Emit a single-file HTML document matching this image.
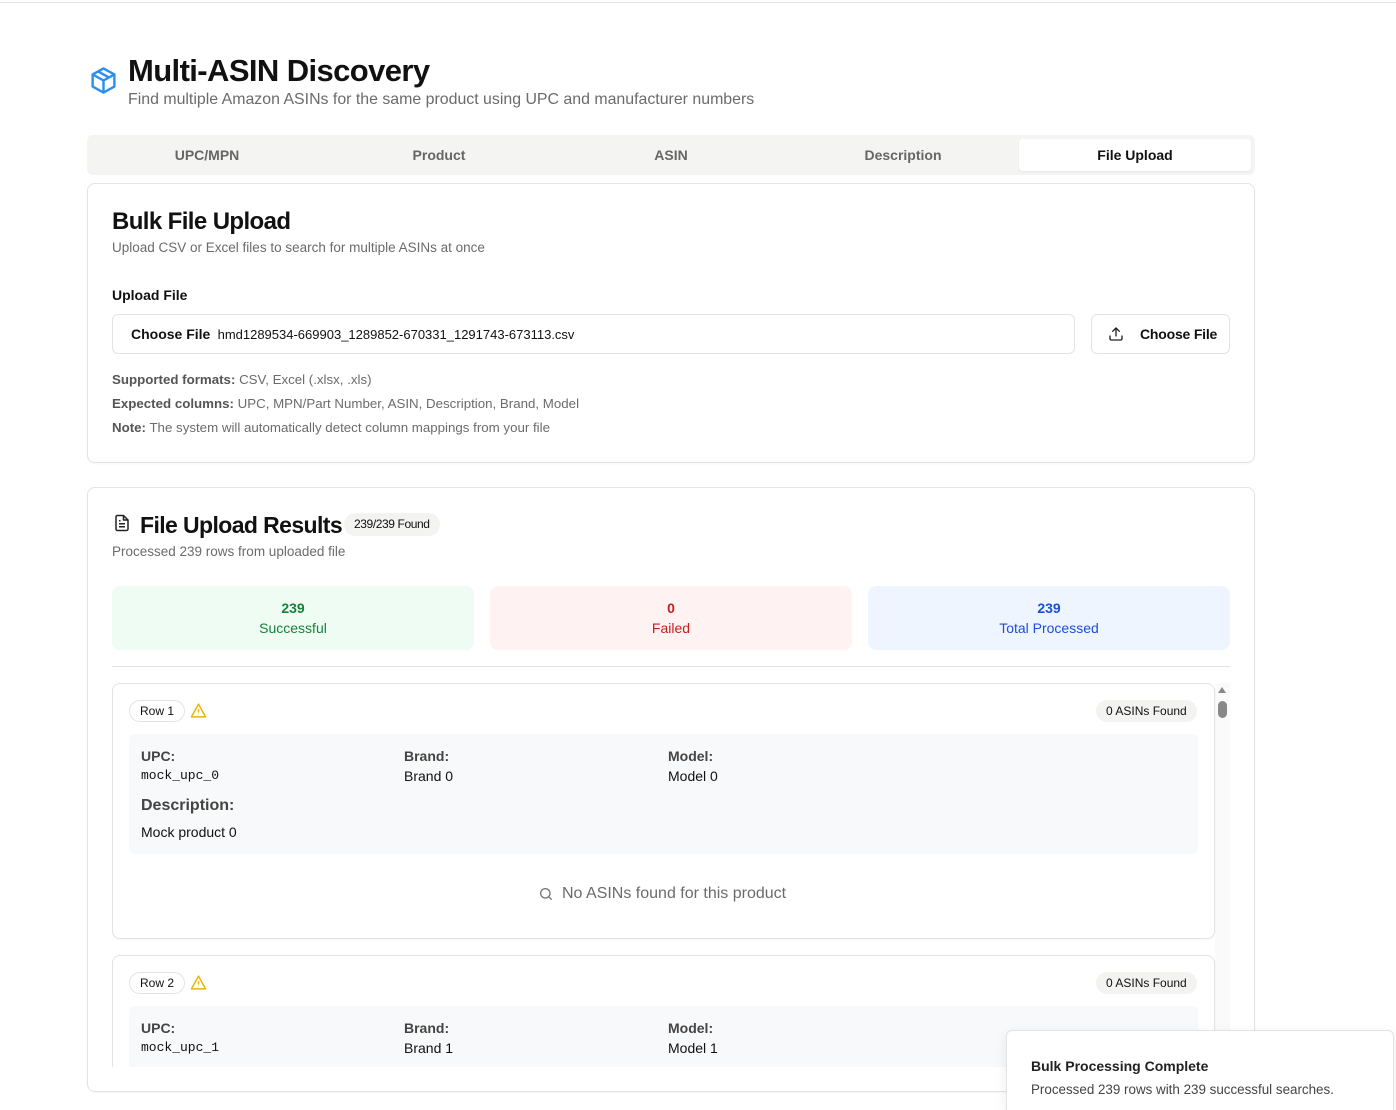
<!DOCTYPE html>
<html><head><meta charset="utf-8"><style>
*{box-sizing:border-box;margin:0;padding:0}
html,body{width:1396px;height:1110px;overflow:hidden}
body{background:#fff;font-family:"Liberation Sans",sans-serif;color:#111;position:relative}
.topline{position:absolute;left:0;top:2px;width:1396px;height:1px;background:#e5e5e5}
.abs{position:absolute}
.card{position:absolute;border:1px solid #e3e3e3;border-radius:8px;background:#fff;box-shadow:0 1px 2px rgba(0,0,0,.04)}
.gray{color:#6b6b6b}
.pill{position:absolute;border:1px solid #e3e3e3;border-radius:12px;font-size:12px;padding:0 10px;height:22px;line-height:20px}
.stat{position:absolute;top:586px;height:64px;width:362px;border-radius:8px;text-align:center;font-size:14px;padding-top:12px;line-height:20px}
.lbl{font-size:14px;font-weight:bold;color:#444}
.mono{font-family:"Liberation Mono",monospace;font-size:13px}
</style></head><body>
<div class="topline"></div>
<svg class="abs" style="left:89px;top:66px" width="29" height="29" viewBox="0 0 24 24" fill="none" stroke="#2b8ff0" stroke-width="2" stroke-linejoin="round"><path d="M12 2 21 7v10l-9 5-9-5V7z"/><path d="M3 7l9 5 9-5M12 12v10M7.5 4.5l9 5"/></svg>
<div class="abs" style="left:128px;top:53px;font-size:31px;font-weight:bold;letter-spacing:-0.6px">Multi-ASIN Discovery</div>
<div class="abs gray" style="left:128px;top:91px;font-size:15.9px">Find multiple Amazon ASINs for the same product using UPC and manufacturer numbers</div>

<div class="abs" style="left:87px;top:135px;width:1168px;height:40px;background:#f4f4f3;border-radius:6px;font-size:14px;font-weight:bold;color:#666">
<div class="abs" style="left:0;width:240px;top:12px;text-align:center">UPC/MPN</div>
<div class="abs" style="left:232px;width:240px;top:12px;text-align:center">Product</div>
<div class="abs" style="left:464px;width:240px;top:12px;text-align:center">ASIN</div>
<div class="abs" style="left:696px;width:240px;top:12px;text-align:center">Description</div>
<div class="abs" style="left:932px;top:4px;width:232px;height:32px;background:#fff;border-radius:4px;color:#111;text-align:center;line-height:32px;box-shadow:0 1px 2px rgba(0,0,0,.06)">File Upload</div>
</div>

<div class="card" style="left:87px;top:183px;width:1168px;height:280px"></div>
<div class="abs" style="left:112px;top:208px;font-size:24px;font-weight:bold;letter-spacing:-0.6px">Bulk File Upload</div>
<div class="abs gray" style="left:112px;top:240px;font-size:13.5px">Upload CSV or Excel files to search for multiple ASINs at once</div>
<div class="abs" style="left:112px;top:287px;font-size:14px;font-weight:bold">Upload File</div>
<div class="abs" style="left:112px;top:314px;width:963px;height:40px;border:1px solid #e3e3e3;border-radius:6px;font-size:13px;line-height:38px;padding-left:18px"><b style="font-size:14px">Choose File</b>&nbsp; hmd1289534-669903_1289852-670331_1291743-673113.csv</div>
<div class="abs" style="left:1091px;top:314px;width:139px;height:40px;border:1px solid #e3e3e3;border-radius:6px;font-size:14px;font-weight:bold;line-height:38px;padding-left:48px;letter-spacing:-0.2px">Choose File</div>
<svg class="abs" style="left:1108px;top:326px" width="16" height="16" viewBox="0 0 24 24" fill="none" stroke="#222" stroke-width="2" stroke-linecap="round" stroke-linejoin="round"><path d="M21 15v4a2 2 0 0 1-2 2H5a2 2 0 0 1-2-2v-4M17 8l-5-5-5 5M12 3v12"/></svg>
<div class="abs gray" style="left:112px;top:368px;font-size:13.3px;line-height:24px"><b style="color:#555">Supported formats:</b> CSV, Excel (.xlsx, .xls)<br><b style="color:#555">Expected columns:</b> UPC, MPN/Part Number, ASIN, Description, Brand, Model<br><b style="color:#555">Note:</b> The system will automatically detect column mappings from your file</div>

<div class="card" style="left:87px;top:487px;width:1168px;height:605px"></div>
<svg class="abs" style="left:113px;top:514px" width="18" height="18" viewBox="0 0 24 24" fill="none" stroke="#222" stroke-width="2" stroke-linejoin="round"><path d="M14 2H6a2 2 0 0 0-2 2v16a2 2 0 0 0 2 2h12a2 2 0 0 0 2-2V8z"/><path d="M14 2v6h6M8 13h8M8 17h8M8 9h2"/></svg>
<div class="abs" style="left:140px;top:512px;font-size:23px;font-weight:bold;letter-spacing:-0.6px;white-space:nowrap">File Upload Results</div>
<div class="abs" style="left:344px;top:513px;height:23px;border-radius:12px;background:#f3f3f2;font-size:12px;padding:0 10px;line-height:23px;letter-spacing:-0.4px">239/239 Found</div>
<div class="abs gray" style="left:112px;top:544px;font-size:13.5px">Processed 239 rows from uploaded file</div>
<div class="stat" style="left:112px;background:#effcf3;color:#17803d"><b>239</b><br>Successful</div>
<div class="stat" style="left:490px;background:#fef2f2;color:#c81e1e"><b>0</b><br>Failed</div>
<div class="stat" style="left:868px;background:#eff5ff;color:#1d4ed8"><b>239</b><br>Total Processed</div>
<div class="abs" style="left:112px;top:666px;width:1118px;height:1px;background:#e3e3e3"></div>

<div class="abs" style="left:112px;top:683px;width:1118px;height:384px;overflow:hidden">
<div class="abs" style="left:1103px;top:0;width:15px;height:384px;background:#fafafa"></div>
<div class="abs" style="left:1106px;top:4px;width:0;height:0;border-left:4px solid transparent;border-right:4px solid transparent;border-bottom:6px solid #888"></div>
<div class="abs" style="left:1106px;top:18px;width:9px;height:17px;border-radius:5px;background:#888"></div>

<div class="card" style="left:0;top:0;width:1103px;height:256px"></div>
<div class="pill" style="left:17px;top:17px">Row 1</div>
<svg class="abs" style="left:78px;top:19px" width="17" height="17" viewBox="0 0 24 24" fill="none" stroke="#eab308" stroke-width="2" stroke-linejoin="round"><path d="M12 3 2 21h20z"/><path d="M12 10v5M12 18v.5"/></svg>
<div class="abs" style="left:984px;top:17px;height:22px;border-radius:12px;background:#f3f3f2;font-size:12px;padding:0 10px;line-height:22px">0 ASINs Found</div>
<div class="abs" style="left:17px;top:51px;width:1069px;height:120px;background:#f8f9fa;border-radius:6px"></div>
<div class="abs lbl" style="left:29px;top:65px">UPC:</div><div class="abs mono" style="left:29px;top:85px">mock_upc_0</div>
<div class="abs lbl" style="left:292px;top:65px">Brand:</div><div class="abs" style="left:292px;top:85px;font-size:14px">Brand 0</div>
<div class="abs lbl" style="left:556px;top:65px">Model:</div><div class="abs" style="left:556px;top:85px;font-size:14px">Model 0</div>
<div class="abs" style="left:29px;top:114px;font-size:16px;font-weight:bold;color:#444">Description:</div>
<div class="abs" style="left:29px;top:141px;font-size:14px">Mock product 0</div>
<svg class="abs" style="left:426px;top:203px" width="16" height="16" viewBox="0 0 24 24" fill="none" stroke="#777" stroke-width="2" stroke-linecap="round"><circle cx="11" cy="11" r="7"/><path d="m20 20-4-4"/></svg>
<div class="abs gray" style="left:450px;top:202px;font-size:16px">No ASINs found for this product</div>

<div class="card" style="left:0;top:272px;width:1103px;height:256px"></div>
<div class="pill" style="left:17px;top:289px">Row 2</div>
<svg class="abs" style="left:78px;top:291px" width="17" height="17" viewBox="0 0 24 24" fill="none" stroke="#eab308" stroke-width="2" stroke-linejoin="round"><path d="M12 3 2 21h20z"/><path d="M12 10v5M12 18v.5"/></svg>
<div class="abs" style="left:984px;top:289px;height:22px;border-radius:12px;background:#f3f3f2;font-size:12px;padding:0 10px;line-height:22px">0 ASINs Found</div>
<div class="abs" style="left:17px;top:323px;width:1069px;height:120px;background:#f8f9fa;border-radius:6px"></div>
<div class="abs lbl" style="left:29px;top:337px">UPC:</div><div class="abs mono" style="left:29px;top:357px">mock_upc_1</div>
<div class="abs lbl" style="left:292px;top:337px">Brand:</div><div class="abs" style="left:292px;top:357px;font-size:14px">Brand 1</div>
<div class="abs lbl" style="left:556px;top:337px">Model:</div><div class="abs" style="left:556px;top:357px;font-size:14px">Model 1</div>
</div>

<div class="abs" style="left:1006px;top:1030px;width:388px;height:80px;background:#fff;border:1px solid #e3e3e3;border-bottom:none;border-radius:6px 6px 0 0;box-shadow:0 4px 12px rgba(0,0,0,.08)">
<div class="abs" style="left:24px;top:27px;font-size:14px;font-weight:bold;color:#222">Bulk Processing Complete</div>
<div class="abs" style="left:24px;top:51px;font-size:13.4px;color:#444">Processed 239 rows with 239 successful searches.</div>
</div>
</body></html>
